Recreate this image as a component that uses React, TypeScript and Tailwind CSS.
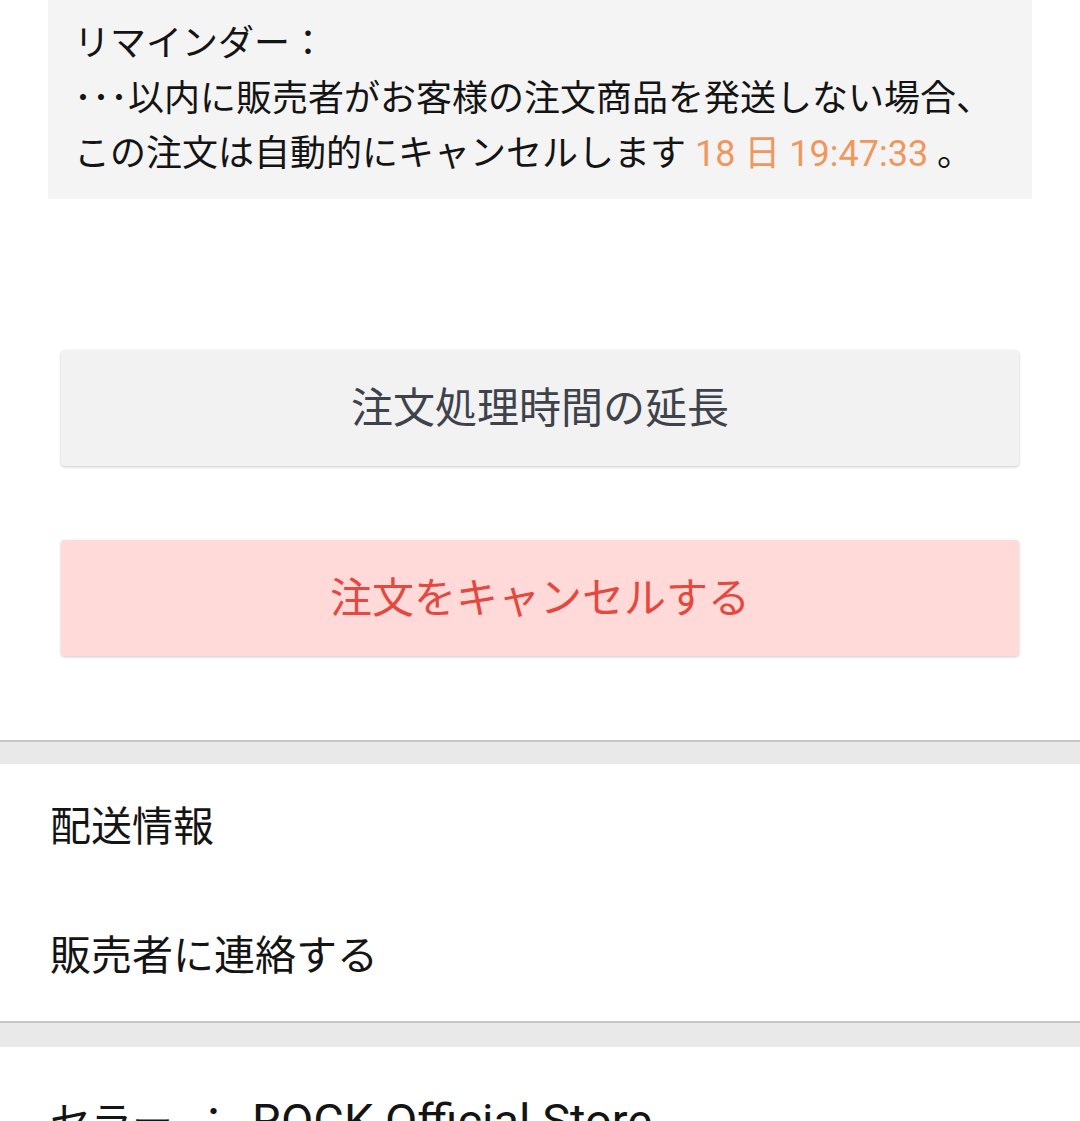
export default function App() {
  const font = "font-['Roboto','Noto_Sans_CJK_JP',sans-serif]";
  return (
    <div className={`min-h-[1121px] w-full overflow-hidden bg-white ${font}`}>
      <div className="mx-[48px] bg-[#f4f4f4] pl-[26px] pr-[20px] py-[17px] text-[36px] leading-[55px] text-[#141414]">
        <p>リマインダー：</p>
        <p className="whitespace-nowrap">･･･以内に販売者がお客様の注文商品を発送しない場合、</p>
        <p>
          この注文は自動的にキャンセルします{" "}
          <span className="text-[#f0975e]">18 日 19:47:33</span> 。
        </p>
      </div>

      <div className="mx-[61px] mt-[151px] flex flex-col gap-[74px]">
        <button
          type="button"
          className="flex h-[116px] items-center justify-center rounded-[4px] bg-[#f2f2f2] text-[42px] text-[#3e424a] shadow-[0_1px_3px_rgba(0,0,0,0.22)]"
        >
          注文処理時間の延長
        </button>
        <button
          type="button"
          className="flex h-[116px] items-center justify-center rounded-[4px] bg-[#ffdad8] text-[42px] text-[#e5483e] shadow-[0_1px_3px_rgba(0,0,0,0.22)]"
        >
          注文をキャンセルする
        </button>
      </div>

      <div className="mt-[84px] h-[24px] border-t-2 border-[#c6c6c6] bg-[#e9e9e9]" />
      <div className="text-[41px] text-[#141414]">
        <div className="flex h-[128px] items-center px-[50px]">配送情報</div>
        <div className="flex h-[129px] items-center px-[50px]">販売者に連絡する</div>
      </div>
      <div className="h-[26px] border-t-2 border-[#c6c6c6] bg-[#e9e9e9]" />
      <div className="whitespace-nowrap px-[50px] pt-[46px] text-[41px] leading-[56px] text-[#141414]">
        セラー<span className="ml-[20px]">：</span>
        <span className="ml-[18px] text-[47px]">ROCK Official Store</span>
      </div>
    </div>
  );
}
